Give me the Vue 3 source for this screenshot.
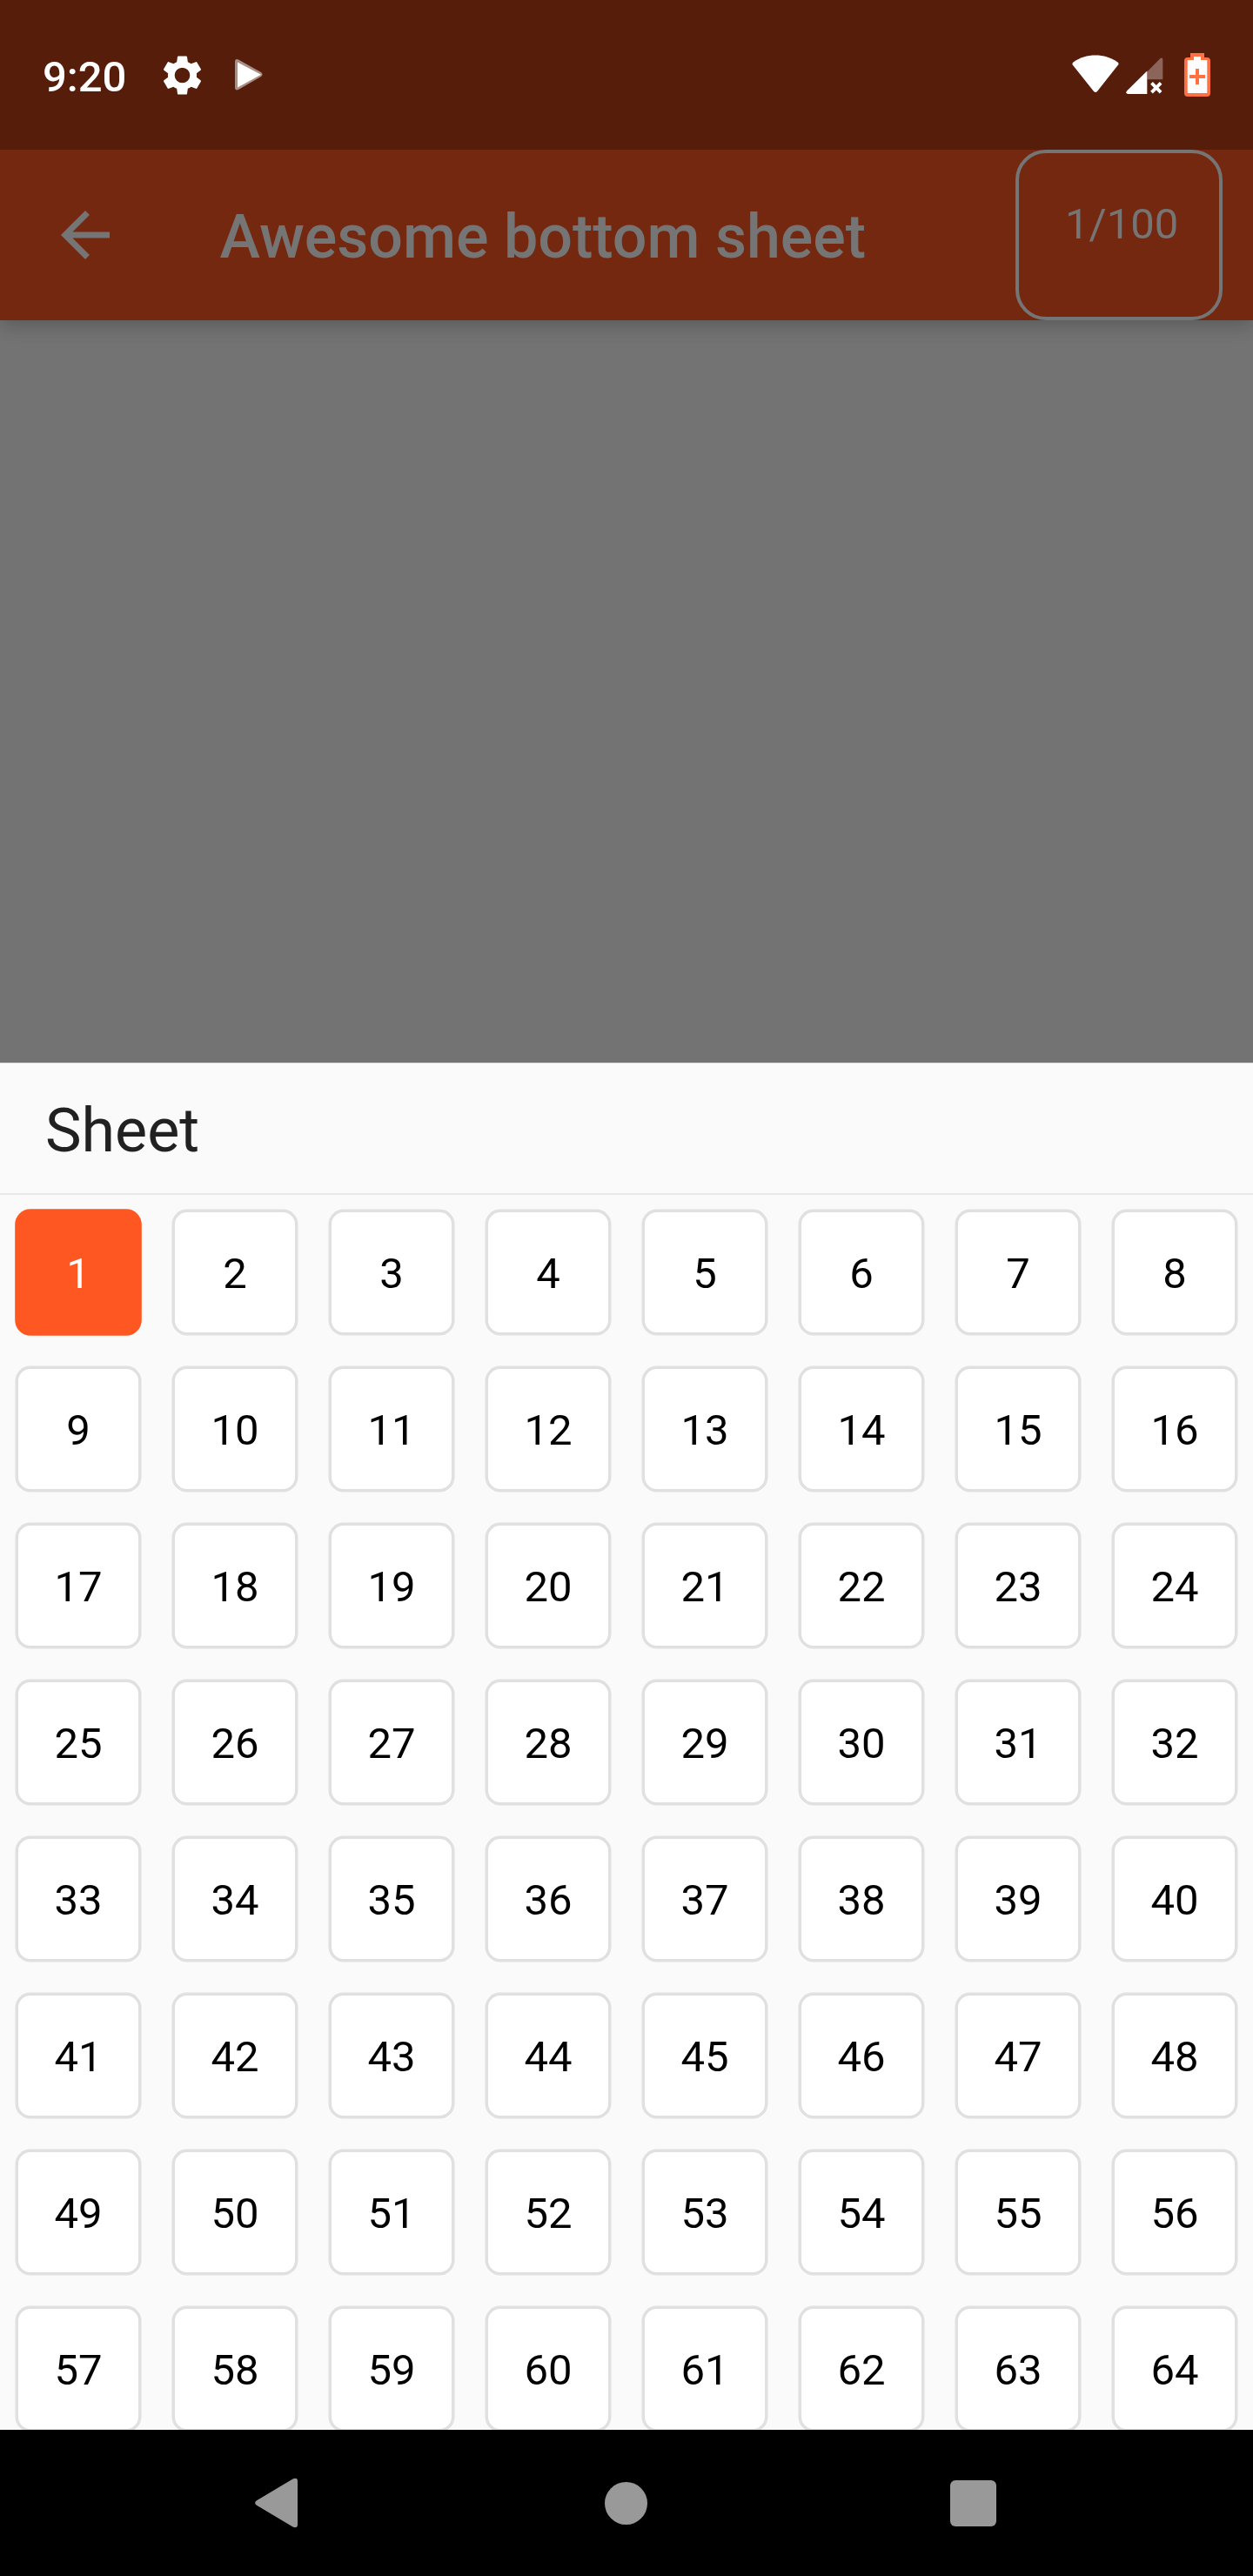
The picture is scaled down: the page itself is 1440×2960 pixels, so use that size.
<script setup>
const items = Array.from({ length: 64 }, (_, i) => i + 1)
const selected = 1
</script>

<template>
  <div class="screen">
    <div class="status">
      <span class="time">9:20</span>
      <svg class="gear" width="56" height="56" viewBox="0 0 24 24">
        <path fill="#fff" d="M19.43 12.98c.04-.32.07-.64.07-.98s-.03-.66-.07-.98l2.11-1.65c.19-.15.24-.42.12-.64l-2-3.46c-.12-.22-.39-.3-.61-.22l-2.49 1c-.52-.4-1.08-.73-1.69-.98l-.38-2.65C14.46 2.18 14.25 2 14 2h-4c-.25 0-.46.18-.49.42l-.38 2.65c-.61.25-1.17.59-1.69.98l-2.49-1c-.23-.09-.49 0-.61.22l-2 3.46c-.13.22-.07.49.12.64l2.11 1.65c-.04.32-.07.65-.07.98s.03.66.07.98l-2.11 1.65c-.19.15-.24.42-.12.64l2 3.46c.12.22.39.3.61.22l2.49-1c.52.4 1.08.73 1.69.98l.38 2.65c.03.24.24.42.49.42h4c.25 0 .46-.18.49-.42l.38-2.65c.61-.25 1.17-.59 1.69-.98l2.49 1c.23.09.49 0 .61-.22l2-3.46c.12-.22.07-.49-.12-.64l-2.11-1.65zM12 16a4 4 0 1 1 0-8 4 4 0 0 1 0 8z" />
      </svg>
      <svg class="play" width="34" height="38" viewBox="0 0 34 38">
        <path fill="#a98e85" d="M1 4q0-4 4-2.500l26 14.500q3 2.500 0 5L5 36q-4 1.500-4-2z" />
        <path fill="#fff" d="M4 4.500v29L31 18.700z" />
      </svg>
      <div class="right">
        <svg class="wifi" width="54" height="44" viewBox="0 0 54 44">
          <path fill="#fff" d="M.7 11.500Q-.2 9.700 1.500 8.400C9 3 17.500.400 27 .400S45 3 52.500 8.400q1.700 1.300.6 3.100L29 42q-2 2-4 0z" />
        </svg>
        <svg class="signal" width="43" height="43" viewBox="0 0 43 43">
          <path fill="#8c655a" d="M24.300 16.500 39.500 1q2.800-1.500 2.800 1.500v22.800h-18z" />
          <path fill="#fff" d="M24.300 15.500V42H2Q-.8 41 1 38.500z" />
          <path stroke="#fff" stroke-width="3.800" d="m29.500 29.300 10.600 10.800m0-10.800L29.500 40.100" />
        </svg>
        <svg class="battery" width="30" height="50" viewBox="0 0 30 50">
          <path fill="#ff7043" d="M7 0h16v5h3q4 0 4 4v37q0 4-4 4H4q-4 0-4-4V9q0-4 4-4h3z" />
          <path fill="#fff" d="M11 4h8v4h7.300v38H3.700V8H11z" />
          <path fill="#ff7043" d="M13 18h4v7h7v4h-7v7h-4v-7H6v-4h7z" />
        </svg>
      </div>
    </div>

    <header class="appbar">
      <svg class="back" width="84" height="84" viewBox="0 0 24 24">
        <path fill="#757575" d="M20 11H7.830l5.590-5.590L12 4l-8 8 8 8 1.410-1.410L7.830 13H20z" />
      </svg>
      <h1>Awesome bottom sheet</h1>
      <div class="counter">1/100</div>
    </header>

    <div class="scrim"></div>

    <section class="sheet">
      <h2>Sheet</h2>
      <div class="grid">
        <div v-for="n in items" :key="n" class="cell" :class="{ active: n === selected }">{{ n }}</div>
      </div>
    </section>

    <nav>
      <svg class="nav-back" width="50" height="58" viewBox="0 0 50 58">
        <path fill="#999" d="M1.600 26.400 43.500 1.400Q49 -.500 49 4v50q0 4.500-5.500 2.600L1.600 31.600q-3-2.600 0-5.200z" />
      </svg>
      <span class="home"></span>
      <span class="recent"></span>
    </nav>
  </div>
</template>

<style>
body {
  margin: 0;
}
</style>

<style scoped>
.screen {
  width: 1440px;
  height: 2960px;
  display: flex;
  flex-direction: column;
  overflow: hidden;
  background: #737373;
  font-family: Roboto, sans-serif;
}
.status {
  height: 172px;
  flex: none;
  box-sizing: border-box;
  padding: 0 49px 0 49px;
  display: flex;
  align-items: center;
  background: #561d0b;
}
.time {
  width: 98px;
  padding-top: 5px;
  color: #fff;
  font-size: 49px;
  font-weight: 500;
  line-height: 58px;
}
.gear {
  width: 53px;
  height: 53px;
  margin-left: 36px;
}
.play {
  margin: 0 0 0 33px;
}
.right {
  margin-left: auto;
  display: flex;
  align-items: center;
}
.right svg {
  display: block;
}
.wifi {
  margin-bottom: 2px;
}
.signal {
  margin: 2px 0 0 8px;
}
.battery {
  margin-left: 24px;
}
.appbar {
  position: relative;
  height: 196px;
  flex: none;
  box-sizing: border-box;
  padding: 0 35px 0 56px;
  display: flex;
  align-items: center;
  background: #752810;
  color: #757575;
  box-shadow: 0 7px 14px -3.500px rgba(0, 0, 0, 0.1), 0 14px 17px 0 rgba(0, 0, 0, 0.05), 0 3px 28px 0 rgba(0, 0, 0, 0.06);
  clip-path: inset(0 0 -60px 0);
}
h1 {
  margin: 4px 0 0 112.600px;
  font-size: 70px;
  line-height: 82px;
  font-weight: 500;
  white-space: nowrap;
}
.counter {
  width: 238px;
  height: 196px;
  box-sizing: border-box;
  margin-left: auto;
  padding: 53px 0 0 53px;
  border: 4px solid #757575;
  border-radius: 35px;
  font-size: 49px;
  line-height: 58px;
}
.scrim {
  height: 853px;
  flex: none;
}
.sheet {
  height: 1571px;
  flex: none;
  overflow: hidden;
  background: #fafafa;
  box-shadow: inset 0 1px #dcdcdc;
}
h2 {
  box-sizing: border-box;
  height: 152px;
  margin: 0;
  padding: 37px 0 0 52px;
  border-bottom: 2px solid #e8e8e8;
  color: #212121;
  font-size: 70px;
  line-height: 82px;
  font-weight: 400;
}
.grid {
  display: grid;
  grid-template-columns: repeat(8, 144px);
  grid-auto-rows: 144px;
  gap: 36px;
  padding: 17px 18px 0;
}
.cell {
  box-sizing: border-box;
  border: 3px solid #e0e0e0;
  border-radius: 17px;
  box-shadow: 0 0 0 0.500px #e0e0e0;
  padding-top: 2px;
  background: #fff;
  color: #000;
  font-size: 49px;
  line-height: 138px;
  text-align: center;
}
.active {
  border-color: #ff5722;
  box-shadow: 0 0 0 0.800px #ff5722;
  background: #ff5722;
  color: #fff;
}
nav {
  height: 168px;
  flex: none;
  display: flex;
  align-items: center;
  background: #000;
}
.nav-back {
  margin-left: 293px;
}
.home {
  width: 49px;
  height: 49px;
  margin-left: 352px;
  border-radius: 50%;
  background: #999;
}
.recent {
  width: 53px;
  height: 53px;
  margin-left: 348px;
  border-radius: 6px;
  background: #999;
}
</style>
